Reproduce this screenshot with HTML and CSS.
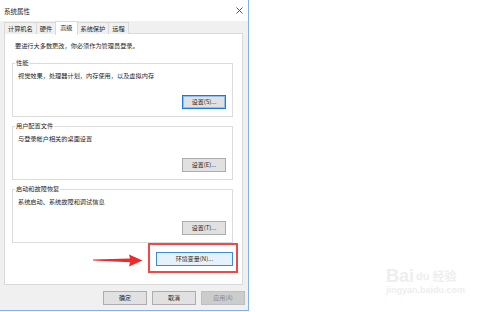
FILE: index.html
```html
<!DOCTYPE html>
<html lang="zh-CN">
<head>
    <meta charset="UTF-8">
    <title>系统属性</title>
    <link rel="stylesheet" href="styles.css">
</head>
<body>
    <div class="window">
        <div class="titlebar">
            <span class="title">系统属性</span>
            <svg class="close" width="7" height="7" viewBox="0 0 7 7">
                <path d="M0.5 0.5 L6.5 6.5 M6.5 0.5 L0.5 6.5" stroke="#444" stroke-width="0.9"/>
            </svg>
        </div>

        <div class="tabs">
            <div class="tab">计算机名</div>
            <div class="tab">硬件</div>
            <div class="tab active">高级</div>
            <div class="tab">系统保护</div>
            <div class="tab">远程</div>
        </div>

        <div class="panel">
            <div class="notice">要进行大多数更改，你必须作为管理员登录。</div>

            <div class="group">
                <div class="group-title">性能</div>
                <div class="group-desc">视觉效果，处理器计划，内存使用，以及虚拟内存</div>
                <button class="btn focused">设置(S)...</button>
            </div>

            <div class="group">
                <div class="group-title">用户配置文件</div>
                <div class="group-desc">与登录帐户相关的桌面设置</div>
                <button class="btn">设置(E)...</button>
            </div>

            <div class="group">
                <div class="group-title">启动和故障恢复</div>
                <div class="group-desc">系统启动、系统故障和调试信息</div>
                <button class="btn">设置(T)...</button>
            </div>

            <div class="env-row">
                <button class="btn env">环境变量(N)...</button>
            </div>
        </div>

        <div class="footer">
            <button class="btn">确定</button>
            <button class="btn">取消</button>
            <button class="btn disabled">应用(A)</button>
        </div>

        <!-- annotation drawn over the screenshot -->
        <div class="highlight"></div>
        <svg class="arrow" width="56" height="16" viewBox="90 252 56 16">
            <polygon points="93,259.6 130,258.6 129,254.5 142.5,260.5 129,266.5 130,262.2 93,260.4" fill="#ee2a2a"/>
        </svg>
    </div>

    <div class="watermark">
        <div class="wm-logo"><span class="wm-bai">Bai</span><span class="wm-du">du</span><span class="wm-jy">经验</span></div>
        <div class="wm-url">jingyan.baidu.com</div>
    </div>
</body>
</html>
```

FILE: styles.css
```css
body {
    margin: 0;
    background-color: #fff;
    font-family: "Noto Sans CJK SC", "Liberation Sans", sans-serif;
    color: #1e1e1e;
}
.window {
    position: relative;
    width: 248px;
    height: 310px;
    background-color: #f0f0f0;
    border-right: 1px solid #7fb2e5;
    border-bottom: 1px solid #7fb2e5;
}
.titlebar {
    height: 21px;
    background-color: #fff;
    display: flex;
    align-items: center;
    justify-content: space-between;
    padding: 0 5px 0 4px;
    box-sizing: border-box;
}
.title {
    font-size: 6.5px;
    line-height: 10px;
}
.close {
    display: block;
    margin-top: -1px;
}
.tabs {
    display: flex;
    align-items: flex-end;
    height: 13px;
    padding-left: 4px;
    margin-bottom: -1px;
    position: relative;
    z-index: 1;
}
.tab {
    height: 12px;
    min-width: 19px;
    box-sizing: border-box;
    border: 1px solid #d9d9d9;
    border-bottom: none;
    margin-right: -1px;
    padding: 0 3px;
    font-size: 6.2px;
    line-height: 11px;
    text-align: center;
    background-color: #f0f0f0;
}
.tab.active {
    height: 14px;
    margin-bottom: -1px;
    background-color: #fff;
    padding: 0 4px;
    line-height: 12px;
}
.panel {
    margin-left: 4px;
    width: 239px;
    height: 252px;
    box-sizing: border-box;
    border: 1px solid #d9d9d9;
    background-color: #fff;
    padding: 7px 9px 0 7px;
}
.notice {
    font-size: 6.2px;
    line-height: 10px;
    padding-left: 3px;
}
.group {
    display: flex;
    flex-direction: column;
    height: 54px;
    box-sizing: border-box;
    border: 1px solid #dcdcdc;
    margin-top: 9px;
    padding-left: 5px;
}
.notice + .group {
    margin-top: 12px;
}
.group-title {
    align-self: flex-start;
    font-size: 6.2px;
    line-height: 8px;
    margin-top: -5px;
    margin-left: -3px;
    padding: 0 1px;
    background-color: #fff;
}
.group-desc {
    font-size: 6.2px;
    line-height: 10px;
    margin-top: 4px;
}
.btn {
    width: 44px;
    height: 14px;
    box-sizing: border-box;
    border: 1px solid #adadad;
    background-color: #e1e1e1;
    font-family: inherit;
    font-size: 6px;
    line-height: 12px;
    color: #1e1e1e;
    padding: 0;
    margin: 0;
}
.group .btn {
    align-self: flex-end;
    margin-top: auto;
    margin-bottom: 7px;
    margin-right: 6px;
}
.btn.focused {
    border: 1px solid #1f7ad4;
    box-shadow: inset 0 0 0 1px #8fc0ec;
}
.env-row {
    display: flex;
    justify-content: flex-end;
    margin-top: 9px;
}
.btn.env {
    width: 77px;
    border: 1px solid #3c8ad8;
    background-color: #e5f1fb;
}
.footer {
    display: flex;
    justify-content: flex-end;
    gap: 5px;
    margin-top: 6px;
    padding-right: 3px;
}
.btn.disabled {
    background-color: #cccccc;
    border-color: #bfbfbf;
    color: #8a8a8a;
}
.highlight {
    position: absolute;
    left: 148px;
    top: 243px;
    width: 90px;
    height: 30px;
    box-sizing: border-box;
    border: 2px solid #f04848;
}
.arrow {
    position: absolute;
    left: 90px;
    top: 252px;
}
.watermark {
    position: absolute;
    left: 386px;
    top: 267px;
    color: #eeeeee;
    font-family: "Liberation Sans", "Noto Sans CJK SC", sans-serif;
}
.wm-logo {
    display: flex;
    align-items: flex-end;
    line-height: 18px;
}
.wm-bai {
    font-size: 18px;
    font-weight: bold;
}
.wm-du {
    font-size: 11px;
    font-weight: bold;
    margin: 0 3px 0 2px;
}
.wm-jy {
    font-size: 12px;
    font-family: "Noto Sans CJK SC", sans-serif;
    font-weight: bold;
}
.wm-url {
    font-size: 9px;
    line-height: 11px;
    font-weight: bold;
}
```
